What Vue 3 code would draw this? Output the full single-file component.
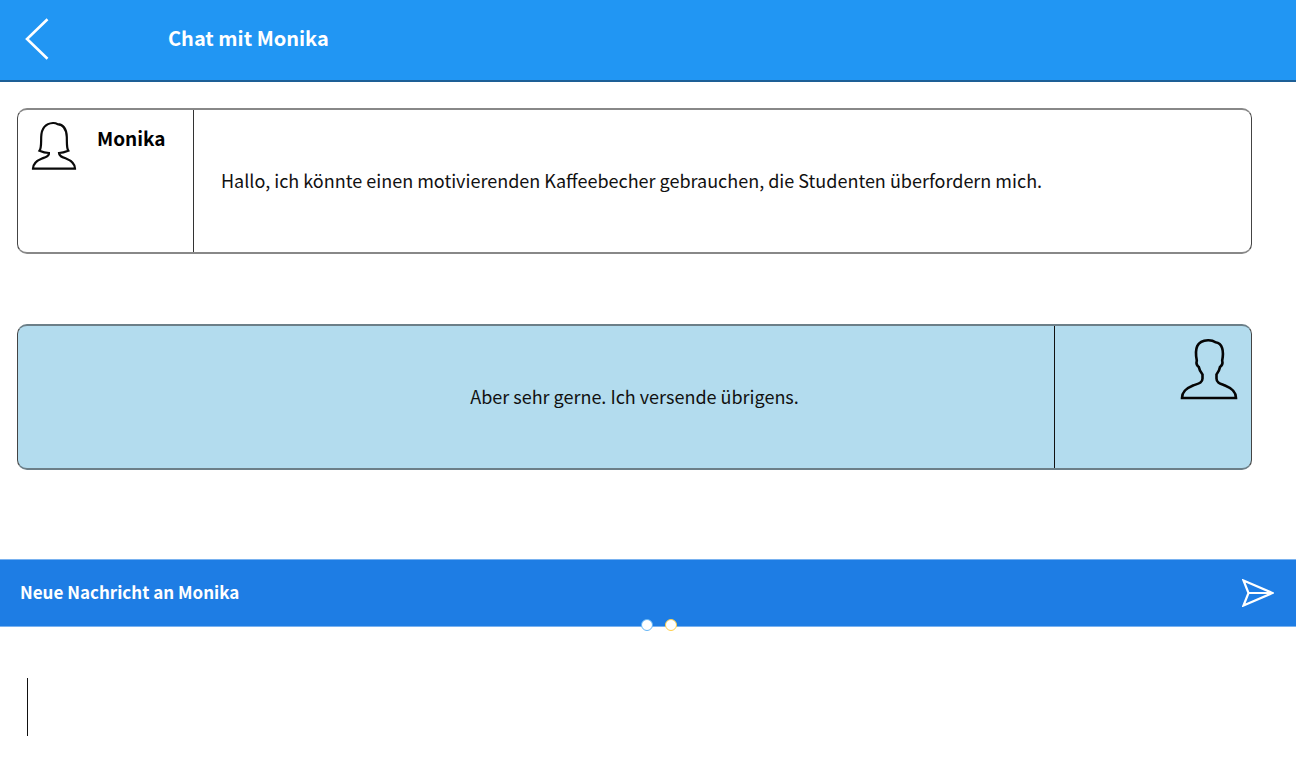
<script setup>
import { ref } from 'vue'

const partner = 'Monika'
const draft = ref('')
</script>

<template>
  <div class="chat">
    <header class="topbar">
      <button class="icon-button back" type="button" aria-label="Zurück">
        <svg width="24" height="42" viewBox="0 0 24 42" fill="none" stroke="#fff" stroke-width="2.6">
          <path d="M22.5 1.2 2 21 22.5 40.8" />
        </svg>
      </button>
      <h1 class="title">Chat mit {{ partner }}</h1>
    </header>

    <main class="messages">
      <article class="message received">
        <div class="sender">
          <svg width="46" height="50" viewBox="0 0 46 50" fill="none" stroke="#0a0a0a" stroke-width="2.2">
            <path d="M2 47.6C2 42 6 39.500 11 37.500C15 36 18.500 35 18 32C14.500 31.800 11.500 31 8.500 29.700C10.500 27 10 23 10.200 16C10.500 7 15 2.500 22 2C24 1.900 25.500 2.500 26.500 3.200C32.500 3.600 35.500 8.500 35.800 16C36 23 35.500 27 37.300 29.700C34 31 31.500 31.800 28 32C28 35 31 36 35 37.500C40 39.500 44 42 44 47.600Z" />
          </svg>
          <h2 class="name">{{ partner }}</h2>
        </div>
        <p class="text">Hallo, ich könnte einen motivierenden Kaffeebecher gebrauchen, die Studenten überfordern mich.</p>
      </article>

      <article class="message sent">
        <p class="text">Aber sehr gerne. Ich versende übrigens.</p>
        <div class="self">
          <svg width="58" height="62" viewBox="0 0 58 62" fill="none" stroke="#050505" stroke-width="2.600">
            <path d="M2 60C2 53 7 50 13 47.500C18 45.600 22.500 45 22.500 40.500V36.500C20.500 34 19.300 32 18.800 29C16.800 27.500 16 25.500 16.800 22.500C14.500 11 16.500 2.500 28 2.200C31 2.100 33.500 2.800 35.500 4.300C42.500 5 44 13 42.200 22.500C43 25.500 42 27.500 40 29C39.500 32 38.500 34 36.500 36.500V40.500C36.500 45 40 45.600 45 47.500C51 50 56 53 56 60Z" />
          </svg>
        </div>
      </article>
    </main>

    <form class="composer" @submit.prevent>
      <div class="composer-bar">
        <label class="composer-label" for="draft">Neue Nachricht an {{ partner }}</label>
        <button class="icon-button" type="submit" aria-label="Senden">
          <svg width="32" height="28" viewBox="0 0 32 28" fill="none" stroke="#fff" stroke-width="2.2">
            <path d="M1.500 1.500 30.500 14 1.500 26.500 6.500 14ZM6.500 14H30" />
          </svg>
        </button>
        <div class="dots">
          <span class="dot"></span>
          <span class="dot yellow"></span>
        </div>
      </div>
      <div class="field">
        <textarea id="draft" v-model="draft"></textarea>
        <span v-if="!draft" class="caret"></span>
      </div>
    </form>
  </div>
</template>

<style>
body {
  margin: 0;
  background: #fff;
}
</style>

<style scoped>
.chat {
  display: flex;
  flex-direction: column;
  min-height: 100vh;
  font-family: "Noto Sans CJK SC", "Noto Sans", sans-serif;
  font-size: 18px;
  line-height: 28px;
  color: #111;
}

.topbar {
  display: flex;
  align-items: center;
  box-sizing: border-box;
  height: 82px;
  padding: 0 25px 2px;
  background: #2196f3;
  border-bottom: 2px solid #1d5f96;
}

.icon-button {
  display: flex;
  padding: 0;
  border: 0;
  background: none;
  cursor: pointer;
}

.back {
  width: 143px;
}

.title {
  margin: 0;
  padding-bottom: 2px;
  font-size: 20px;
  font-weight: 700;
  color: #fff;
}

.messages {
  display: flex;
  flex-direction: column;
  gap: 70px;
  padding: 26px 44px 89px 17px;
}

.message {
  display: grid;
  box-sizing: border-box;
  min-height: 146px;
  border: solid #888;
  border-width: 2px 1px;
  border-left-color: #444;
  border-right-color: #444;
  border-radius: 10px;
}

.received {
  grid-template-columns: 176px 1fr;
}

.sent {
  grid-template-columns: 1fr 197px;
  border-top-color: #6c7f88;
  border-bottom-color: #6c7f88;
  background: #b3dcee;
}

.sender {
  display: flex;
  align-items: flex-start;
  gap: 20px;
  padding: 11px 0 0 13px;
  border-right: 1px solid #333;
}

.name {
  margin: 3px 0 0;
  font-size: 19px;
  font-weight: 700;
  color: #000;
}

.text {
  align-self: center;
  margin: 0;
  padding-bottom: 2px;
}

.received .text {
  padding-left: 27px;
  padding-right: 27px;
}

.sent .text {
  padding-left: 197px;
  text-align: center;
}

.self {
  display: flex;
  justify-content: flex-end;
  align-items: flex-start;
  padding: 12px 13px 0 0;
  border-left: 1px solid #111;
}

.composer {
  display: flex;
  flex: 1;
  flex-direction: column;
}

.composer-bar {
  position: relative;
  display: flex;
  align-items: center;
  justify-content: space-between;
  box-sizing: border-box;
  height: 68px;
  padding: 0 22px 0 20px;
  background: #1e7de4;
  border: solid #79b2f0;
  border-width: 1px 0;
}

.composer-label {
  padding-bottom: 2px;
  font-size: 17px;
  font-weight: 700;
  color: #fff;
}

.dots {
  position: absolute;
  bottom: -5px;
  left: 50%;
  display: flex;
  gap: 12px;
  margin-left: -7px;
}

.dot {
  box-sizing: border-box;
  width: 12px;
  height: 12px;
  border: 1px solid #64b5f6;
  border-radius: 50%;
  background: #fff;
}

.yellow {
  border-color: #ffcf4a;
}

.field {
  position: relative;
  display: flex;
  flex: 1;
}

.field textarea {
  flex: 1;
  min-height: 144px;
  box-sizing: border-box;
  padding: 50px 27px 16px;
  border: 0;
  outline: 0;
  resize: none;
  background: transparent;
  font: inherit;
  color: inherit;
}

.caret {
  position: absolute;
  top: 51px;
  left: 27px;
  width: 1px;
  height: 58px;
  background: #111;
  pointer-events: none;
}
</style>
